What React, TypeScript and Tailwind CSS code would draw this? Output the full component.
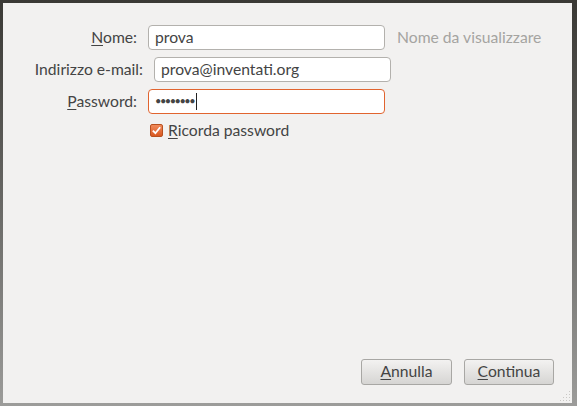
import { useState } from 'react'

const font = { fontFamily: '"Lato", "Open Sans", sans-serif' }

function Field({
  label,
  mnemonic,
  labelWidth,
  value,
  focused,
  children,
}: {
  label: string
  mnemonic: string
  labelWidth: string
  value: React.ReactNode
  focused?: boolean
  children?: React.ReactNode
}) {
  const rest = label.slice(mnemonic.length)
  return (
    <div className="flex h-[25px] items-center">
      <div className={`${labelWidth} shrink-0 pr-[11px] text-right text-[15.7px] text-[#444]`}>
        {mnemonic ? <span className="underline underline-offset-2">{mnemonic}</span> : null}
        {rest}
      </div>
      <div
        className={`flex h-[25px] w-[237px] items-center rounded-[4px] border bg-white px-[6px] text-[15.7px] text-[#444] ${
          focused ? 'border-[#e1642f]' : 'border-[#b3b1ad]'
        }`}
      >
        {value}
      </div>
      {children}
    </div>
  )
}

export default function App() {
  const [remember, setRemember] = useState(true)

  return (
    <div
      className="h-[406px] w-[577px] bg-gradient-to-b from-[#3a3935] to-[#9c9c9a] pb-[3px] pl-[3px] pr-[5px] pt-[3px]"
      style={font}
    >
      <div className="relative flex h-full flex-col bg-[#f2f1f0]">
        <div className="flex flex-col gap-[7px] pt-[22px]">
          <Field label="Nome:" mnemonic="N" labelWidth="w-[145px]" value="prova">
            <span className="ml-[12px] text-[15.7px] text-[#a5a4a1]">Nome da visualizzare</span>
          </Field>
          <Field label="Indirizzo e-mail:" mnemonic="" labelWidth="w-[151px]" value="prova@inventati.org" />
          <Field
            label="Password:"
            mnemonic="P"
            labelWidth="w-[145px]"
            focused
            value={
              <span className="flex items-center text-[11px] tracking-[-1.5px]">
                ••••••••
                <span className="ml-[2px] inline-block h-[17px] w-px bg-[#222]" />
              </span>
            }
          />
        </div>

        <label className="mt-[5px] flex items-center pl-[147px] text-[15.7px] text-[#444]">
          <button
            type="button"
            onClick={() => setRemember(!remember)}
            className="mr-[5px] flex h-[13px] w-[13px] items-center justify-center rounded-[2px] border border-[#b8501f] bg-gradient-to-b from-[#f08a5a] to-[#d9581f]"
          >
            {remember ? (
              <svg viewBox="0 0 12 12" className="h-[11px] w-[11px]">
                <path d="M2 6.2 L4.8 9 L10 2.5" fill="none" stroke="#fff" strokeWidth="2" />
              </svg>
            ) : null}
          </button>
          <span>
            <span className="underline underline-offset-2">R</span>icorda password
          </span>
        </label>

        <div className="mt-auto flex justify-end gap-[12px] pb-[18px] pr-[18px]">
          <button
            type="button"
            className="h-[26px] w-[91px] rounded-[3px] border border-[#a8a7a4] bg-gradient-to-b from-[#f3f2f1] to-[#d6d5d3] text-[15.7px] text-[#444]"
          >
            <span className="underline underline-offset-2">A</span>nnulla
          </button>
          <button
            type="button"
            className="h-[26px] w-[90px] rounded-[3px] border border-[#a8a7a4] bg-gradient-to-b from-[#f3f2f1] to-[#d6d5d3] text-[15.7px] text-[#444]"
          >
            <span className="underline underline-offset-2">C</span>ontinua
          </button>
        </div>

        <svg className="absolute bottom-[1px] right-[1px] h-[12px] w-[12px]" viewBox="0 0 12 12">
          {[
            [10, 2], [10, 5], [7, 5], [10, 8], [7, 8], [4, 8], [10, 11], [7, 11], [4, 11], [1, 11],
          ].map(([x, y]) => (
            <rect key={`${x}-${y}`} x={x} y={y - 1} width="1" height="1" fill="#c9c8c5" />
          ))}
        </svg>
      </div>
    </div>
  )
}
